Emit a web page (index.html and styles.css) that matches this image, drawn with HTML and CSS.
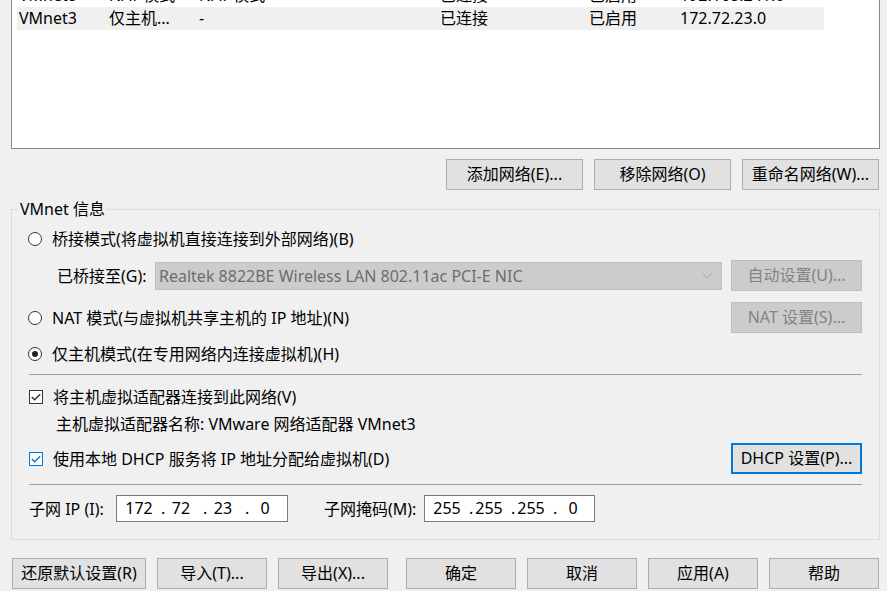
FILE: index.html
```html
<!DOCTYPE html>
<html lang="zh-CN">
<head>
<meta charset="utf-8">
<title>虚拟网络编辑器</title>
<link rel="stylesheet" href="styles.css">
</head>
<body>
<div class="list">
  <div class="row">
    <span>VMnet8</span><span>NAT 模式</span><span>NAT 模式</span><span>已连接</span><span>已启用</span><span>192.168.241.0</span>
  </div>
  <div class="row sel">
    <span>VMnet3</span><span>仅主机...</span><span>-</span><span>已连接</span><span>已启用</span><span>172.72.23.0</span>
  </div>
</div>

<div class="net-actions">
  <button class="btn">添加网络(E)...</button>
  <button class="btn">移除网络(O)</button>
  <button class="btn">重命名网络(W)...</button>
</div>

<div class="group">
  <span class="legend">VMnet 信息</span>

  <div class="opt first">
    <span class="radio"></span><span>桥接模式(将虚拟机直接连接到外部网络)(B)</span>
  </div>

  <div class="bridge">
    <span class="bridge-label">已桥接至(G):</span>
    <div class="select">
      <span>Realtek 8822BE Wireless LAN 802.11ac PCI-E NIC</span>
      <svg class="chev" width="10" height="6" viewBox="0 0 10 6"><path d="M0.5 0.5 L5 5 L9.5 0.5" fill="none" stroke="#a8a8a8" stroke-width="1"/></svg>
    </div>
    <button class="btn side dis">自动设置(U)...</button>
  </div>

  <div class="opt tall nat">
    <span class="radio"></span><span>NAT 模式(与虚拟机共享主机的 IP 地址)(N)</span>
    <button class="btn side dis">NAT 设置(S)...</button>
  </div>

  <div class="opt host">
    <span class="radio on"></span><span>仅主机模式(在专用网络内连接虚拟机)(H)</span>
  </div>

  <div class="sep sep1"></div>

  <div class="opt chk1">
    <span class="check"><svg width="12" height="12" viewBox="0 0 12 12"><path d="M1.8 6 L4.6 8.8 L10.2 3.2" fill="none" stroke="#333" stroke-width="1.5"/></svg></span><span>将主机虚拟适配器连接到此网络(V)</span>
  </div>

  <div class="adapter">主机虚拟适配器名称: VMware 网络适配器 VMnet3</div>

  <div class="opt tall dhcp">
    <span class="check blue"><svg width="12" height="12" viewBox="0 0 12 12"><path d="M1.8 6 L4.6 8.8 L10.2 3.2" fill="none" stroke="#0078d7" stroke-width="1.5"/></svg></span><span>使用本地 DHCP 服务将 IP 地址分配给虚拟机(D)</span>
    <button class="btn side focus">DHCP 设置(P)...</button>
  </div>

  <div class="sep sep2"></div>

  <div class="subnet">
    <span class="ip-label">子网 IP (I):</span>
    <div class="ip ip-addr">
      <span class="f">172</span><span class="d">.</span><span class="f">72</span><span class="d">.</span><span class="f">23</span><span class="d">.</span><span class="f">0</span>
    </div>
    <span class="mask-label">子网掩码(M):</span>
    <div class="ip ip-mask">
      <span class="f">255</span><span class="d">.</span><span class="f">255</span><span class="d">.</span><span class="f">255</span><span class="d">.</span><span class="f">0</span>
    </div>
  </div>
</div>

<div class="footer">
  <div class="grp">
    <button class="btn wide">还原默认设置(R)</button>
    <button class="btn">导入(T)...</button>
    <button class="btn">导出(X)...</button>
  </div>
  <div class="grp">
    <button class="btn">确定</button>
    <button class="btn">取消</button>
    <button class="btn">应用(A)</button>
    <button class="btn">帮助</button>
  </div>
</div>
</body>
</html>
```

FILE: styles.css
```css
html, body {
  margin: 0;
  padding: 0;
}

body {
  background: #f0f0f0;
  color: #000;
  font-family: "Noto Sans", "Noto Sans CJK SC", sans-serif;
  font-size: 16px;
  line-height: 22px;
  overflow: hidden;
  width: 887px;
  height: 591px;
}

/* ---------- network list ---------- */
.list {
  box-sizing: border-box;
  width: 869px;
  height: 166px;
  margin: -17px 0 0 11px;
  padding-left: 5px;
  border: 1px solid #828790;
  background: #fff;
}

.row {
  display: grid;
  grid-template-columns: 90px 90px 241px 149px 91px 146px;
  width: 807px;
  height: 23px;
  line-height: 23px;
}

.row span {
  padding-left: 2px;
  white-space: nowrap;
  overflow: hidden;
}

.row.sel {
  background: #f0f0f0;
}

/* ---------- buttons ---------- */
.btn {
  box-sizing: border-box;
  height: 31px;
  width: 110px;
  padding: 0;
  margin: 0;
  border: 1px solid #adadad;
  background: #e1e1e1;
  color: #000;
  font: inherit;
  line-height: 29px;
  white-space: nowrap;
  flex: none;
}

.btn.wide {
  width: 134px;
}

.btn.side {
  width: 131px;
  margin-left: auto;
}

.btn.dis {
  background: #cccccc;
  border-color: #bfbfbf;
  color: #838383;
}

.btn.focus {
  border: 2px solid #0078d7;
  line-height: 27px;
}

.net-actions {
  display: flex;
  justify-content: flex-end;
  gap: 11px;
  width: 868px;
  margin: 10px 0 0 11px;
}

.net-actions .btn {
  width: 137px;
}

/* ---------- group box ---------- */
.group {
  position: relative;
  box-sizing: border-box;
  width: 869px;
  margin: 19px 0 0 11px;
  padding: 18px 17px 17px 17px;
  border: 1px solid #dcdcdc;
}

.legend {
  position: absolute;
  top: -12px;
  left: 6px;
  padding: 0 2px;
  background: #f0f0f0;
  line-height: 22px;
}

.opt {
  display: flex;
  align-items: center;
  height: 22px;
  white-space: nowrap;
}

.opt.tall {
  height: 31px;
}

.nat {
  margin-top: 11px;
}

.host {
  margin-top: 10px;
}

.chk1 {
  margin-top: 11px;
}

.dhcp {
  margin-top: 8px;
}

.radio {
  position: relative;
  box-sizing: border-box;
  flex: none;
  width: 14px;
  height: 14px;
  margin: 0 10px 0 -1px;
  border: 1px solid #333;
  border-radius: 50%;
  background: #fff;
}

.radio.on::after {
  content: "";
  position: absolute;
  inset: 3px;
  border-radius: 50%;
  background: #222;
}

.check {
  box-sizing: border-box;
  flex: none;
  display: flex;
  align-items: center;
  justify-content: center;
  width: 14px;
  height: 14px;
  margin-right: 10px;
  border: 1px solid #333;
  background: #fff;
}

.check svg {
  display: block;
}

.check.blue {
  border-color: #0078d7;
}

.bridge {
  display: flex;
  align-items: center;
  height: 31px;
  margin-top: 10px;
  padding-left: 28px;
  white-space: nowrap;
}

.bridge-label {
  width: 98px;
  flex: none;
}

.select {
  box-sizing: border-box;
  display: flex;
  align-items: center;
  justify-content: space-between;
  width: 567px;
  height: 28px;
  padding: 0 9px 0 3px;
  border: 1px solid #bfbfbf;
  background: #cccccc;
  color: #6d6d6d;
  line-height: 26px;
}

.chev {
  display: block;
  flex: none;
}

.sep {
  height: 1px;
  background: #a0a0a0;
}

.sep1 {
  margin-top: 9px;
}

.sep2 {
  margin-top: 10px;
}

.adapter {
  height: 22px;
  margin-top: 5px;
  padding-left: 27px;
  white-space: nowrap;
}

.subnet {
  display: flex;
  align-items: center;
  height: 27px;
  margin-top: 10px;
  white-space: nowrap;
}

.ip-label {
  width: 87px;
  flex: none;
}

.mask-label {
  width: 100px;
  margin-left: 36px;
  flex: none;
}

.ip {
  box-sizing: border-box;
  display: flex;
  height: 27px;
  padding-left: 6px;
  border: 1px solid #7a7a7a;
  background: #fff;
  line-height: 25px;
  flex: none;
}

.ip-addr {
  width: 172px;
}

.ip-mask {
  width: 171px;
}

.ip .f {
  width: 32px;
  text-align: center;
}

.ip .d {
  width: 4px;
  margin-left: 6px;
}

/* ---------- footer ---------- */
.footer {
  display: flex;
  justify-content: space-between;
  width: 867px;
  margin: 18px 0 0 12px;
}

.grp {
  display: flex;
  gap: 11px;
}
```
